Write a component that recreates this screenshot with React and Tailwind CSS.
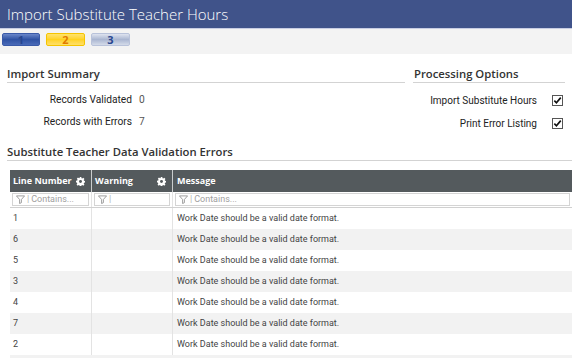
import React from "react";

const rows = ["1", "6", "5", "3", "4", "7", "2"];

function Gear() {
  return (
    <svg width="9" height="9" viewBox="0 0 16 16" className="shrink-0">
      <path
        fill="#ffffff"
        d="M6.6 0h2.8l.4 2.2 1.3.6 1.9-1.3 2 2-1.3 1.9.6 1.3 2.2.4v2.8l-2.2.4-.6 1.3 1.3 1.9-2 2-1.9-1.3-1.3.6-.4 2.2H6.6l-.4-2.2-1.3-.6-1.9 1.3-2-2 1.3-1.9-.6-1.3L0 9.4V6.6l2.2-.4.6-1.3-1.3-1.9 2-2 1.9 1.3 1.3-.6z"
      />
      <circle cx="8" cy="8" r="2.6" fill="#545a5d" />
    </svg>
  );
}

function Funnel() {
  return (
    <svg width="9" height="9" viewBox="0 0 10 10" className="shrink-0">
      <path d="M0.5 1h9L6 5v3.5L4 9.5V5z" fill="none" stroke="#8a8a8a" strokeWidth="0.9" />
    </svg>
  );
}

function Check() {
  return (
    <span className="w-[11px] h-[11px] border border-[#555] bg-white flex items-center justify-center">
      <svg width="9" height="9" viewBox="0 0 10 10">
        <path d="M1.5 5.2l2.3 2.4L8.6 1.8" fill="none" stroke="#111" strokeWidth="1.8" />
      </svg>
    </span>
  );
}

function FilterBox({ placeholder }) {
  return (
    <div className="h-[13px] mx-[2px] border border-[#d4d4d4] bg-white flex items-center pl-[3px] gap-[2px] font-['Roboto',sans-serif] text-[9px] text-[#a0a0a0] leading-none">
      <Funnel />
      <span className="text-[#b0b0b0]">|</span>
      <span>{placeholder}</span>
    </div>
  );
}

export default function App() {
  return (
    <div className="w-[572px] h-[358px] overflow-hidden bg-white font-['Open_Sans',sans-serif] text-[#333]">
      <div className="h-[29px] bg-[#40538a] border-b border-[#c8cde3] flex items-center pl-[7px]">
        <span className="text-[15px] font-light text-white">Import Substitute Teacher Hours</span>
      </div>

      <div className="h-[25px] bg-[#f3f3f3] flex items-start pt-[4px] pl-[2px] gap-[6px]">
        <div className="w-[38px] h-[13px] rounded-[2px] bg-gradient-to-b from-[#6a86c9] via-[#2f52a3] to-[#4a6bb8] border border-[#3a5aa8] flex items-center justify-center text-[11px] font-bold text-[#27458f] leading-none">
          1
        </div>
        <div className="w-[39px] h-[13px] rounded-[2px] bg-gradient-to-b from-[#ffe36a] via-[#ffd21e] to-[#ffe066] border border-[#f5c400] flex items-center justify-center text-[11px] font-bold text-[#e07b00] leading-none">
          2
        </div>
        <div className="w-[39px] h-[13px] rounded-[2px] bg-gradient-to-b from-[#dfe4ef] via-[#aab6d1] to-[#d4dbe9] border border-[#b8c2da] flex items-center justify-center text-[11px] font-bold text-[#2a4790] leading-none">
          3
        </div>
      </div>

      <div className="flex px-[7px] pt-[10px]">
        <div className="flex-1 mr-[8px]">
          <div className="h-[19px] leading-[19px] border-b border-[#d3d3d3] text-[11.3px] font-semibold">Import Summary</div>
          <div className="pt-[6px] font-['Roboto',sans-serif] text-[10.2px] text-[#222]">
            <div className="h-[22px] flex items-center">
              <span className="w-[125px] text-right">Records Validated</span>
              <span className="ml-[7px] text-[#555]">0</span>
            </div>
            <div className="h-[22px] flex items-center">
              <span className="w-[125px] text-right">Records with Errors</span>
              <span className="ml-[7px] text-[#555]">7</span>
            </div>
          </div>
        </div>
        <div className="w-[152px]">
          <div className="h-[19px] leading-[19px] border-b border-[#d3d3d3] text-[11.3px] font-semibold pl-[1px]">Processing Options</div>
          <div className="pt-[6px] font-['Roboto',sans-serif] text-[10px] text-[#222]">
            <div className="h-[23px] flex items-center justify-end gap-[15px] pr-[2px]">
              <span>Import Substitute Hours</span>
              <Check />
            </div>
            <div className="h-[22px] flex items-center justify-end gap-[15px] pr-[2px]">
              <span>Print Error Listing</span>
              <Check />
            </div>
          </div>
        </div>
      </div>

      <div className="pl-[7px] pt-[8px]">
        <div className="h-[19px] leading-[19px] border-b border-[#d3d3d3] text-[11.3px] font-semibold">
          Substitute Teacher Data Validation Errors
        </div>
      </div>

      <div className="ml-[10px] mt-[9px]">
        <div className="h-[22px] bg-[#545a5d] grid grid-cols-[82px_81px_1fr] text-white font-bold text-[9px]">
          <div className="flex items-center justify-between pl-[3px] pr-[6px] border-r border-[#c9cccd]">
            <span>Line Number</span>
            <Gear />
          </div>
          <div className="flex items-center justify-between pl-[3px] pr-[6px] border-r border-[#c9cccd]">
            <span>Warning</span>
            <Gear />
          </div>
          <div className="flex items-center pl-[4px]">Message</div>
        </div>
        <div className="h-[16px] grid grid-cols-[82px_81px_1fr] items-center border-b border-[#d0d0d0]">
          <div className="border-r border-[#e3e3e3] h-full flex flex-col justify-center">
            <FilterBox placeholder="Contains..." />
          </div>
          <div className="border-r border-[#e3e3e3] h-full flex flex-col justify-center">
            <FilterBox placeholder="" />
          </div>
          <div className="h-full flex flex-col justify-center">
            <FilterBox placeholder="Contains..." />
          </div>
        </div>
        {rows.map((n, i) => (
          <div
            key={i}
            className={`h-[21px] grid grid-cols-[82px_81px_1fr] font-['Roboto',sans-serif] text-[9px] text-[#444] ${i % 2 === 1 ? "bg-[#f2f2f2]" : "bg-white"}`}
          >
            <div className="flex items-center pl-[3px] border-r border-[#e3e3e3]">{n}</div>
            <div className="border-r border-[#e3e3e3]"></div>
            <div className="flex items-center pl-[4px]">Work Date should be a valid date format.</div>
          </div>
        ))}
        <div className="h-[10px] bg-[#f2f2f2]"></div>
      </div>
    </div>
  );
}
